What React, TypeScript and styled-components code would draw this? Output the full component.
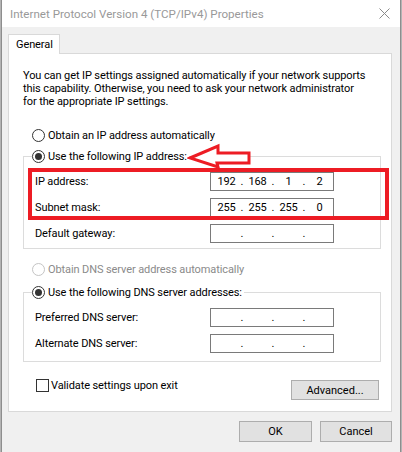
import styled, { createGlobalStyle } from "styled-components";

const GlobalStyle = createGlobalStyle`
  html, body {
    margin: 0;
    padding: 0;
  }
  body {
    background: #b4b4b4;
    font-family: Roboto, "Noto Sans", "Liberation Sans", sans-serif;
    font-size: 11px;
    letter-spacing: -0.1px;
    color: #000;
  }
`;

const Window = styled.div`
  width: 400px;
  height: 452px;
  box-sizing: border-box;
  margin-left: 1px;
  border-left: 1px solid #8e8e8e;
  border-right: 1px solid #8e8e8e;
  background: #f0f0f0;
  display: flex;
  flex-direction: column;
  overflow: hidden;
`;

const TitleBar = styled.div`
  height: 27px;
  flex-shrink: 0;
  background: #fff;
  display: flex;
  align-items: center;
  justify-content: space-between;
  padding: 0 10px 0 8px;
`;

const Title = styled.span`
  font-size: 11.6px;
  letter-spacing: 0;
  color: #999;
  white-space: nowrap;
`;

const Body = styled.div`
  flex: 1;
  display: flex;
  flex-direction: column;
  padding: 7px 8px 0 6px;
`;

const Tab = styled.div`
  align-self: flex-start;
  width: 52px;
  height: 20px;
  box-sizing: border-box;
  padding-left: 7px;
  border: 1px solid #d9d9d9;
  border-bottom: none;
  background: #fff;
  margin-bottom: -1px;
  position: relative;
  z-index: 1;
  display: flex;
  align-items: center;
`;

const Panel = styled.div`
  position: relative;
  height: 359px;
  box-sizing: border-box;
  border: 1px solid #d9d9d9;
  background: #fff;
  padding: 15px 10px 0 14px;
  display: flex;
  flex-direction: column;
`;

const Intro = styled.p`
  margin: 0;
  line-height: 13px;
  white-space: nowrap;
`;

const RadioRow = styled.label<{ $disabled?: boolean; $top?: number }>`
  display: flex;
  align-items: center;
  gap: 3px;
  height: 16px;
  margin: ${(p) => p.$top ?? 0}px 0 0 9px;
  color: ${(p) => (p.$disabled ? "#8a8a8a" : "#000")};
  white-space: nowrap;
`;

const RadioCircle = styled.span<{ $checked?: boolean; $disabled?: boolean }>`
  width: 13px;
  height: 13px;
  box-sizing: border-box;
  border-radius: 50%;
  border: 1px solid ${(p) => (p.$disabled ? "#c4c4c4" : "#333")};
  background: #fff;
  display: inline-flex;
  align-items: center;
  justify-content: center;
  flex-shrink: 0;
  &::after {
    content: "";
    width: 7px;
    height: 7px;
    border-radius: 50%;
    background: #333;
    display: ${(p) => (p.$checked ? "block" : "none")};
  }
`;

const GroupBox = styled.fieldset<{ $top: number; $bottom: number }>`
  margin: ${(p) => p.$top}px 0 0 0;
  width: 358px;
  min-width: 0;
  box-sizing: border-box;
  border: 1px solid #dcdcdc;
  padding: 8px 0 ${(p) => p.$bottom}px 8px;
`;

const Legend = styled.legend`
  padding: 0 2px 0 0;
  margin: 0;
  height: 16px;
  display: flex;
  align-items: center;
  gap: 3px;
  white-space: nowrap;
`;

const Rows = styled.div`
  display: flex;
  flex-direction: column;
  gap: 7px;
  padding-left: 3px;
`;

const FieldRow = styled.div`
  display: grid;
  grid-template-columns: 175px 124px;
  align-items: center;
  height: 19px;
`;

const IpBox = styled.div`
  height: 19px;
  box-sizing: border-box;
  border: 1px solid #7a7a7a;
  background: #fff;
  display: flex;
  align-items: center;
  padding-left: 2px;
`;

const Octet = styled.span`
  width: 27px;
  text-align: center;
`;

const Dot = styled.span`
  width: 4px;
  text-align: center;
`;

const BottomRow = styled.div`
  display: flex;
  justify-content: space-between;
  align-items: flex-start;
  margin-top: 17px;
  width: 356px;
`;

const CheckRow = styled.label`
  display: flex;
  align-items: center;
  gap: 2px;
  height: 13px;
  margin-left: 13px;
  white-space: nowrap;
`;

const CheckBox = styled.span`
  width: 13px;
  height: 13px;
  box-sizing: border-box;
  border: 1px solid #333;
  background: #fff;
`;

const Button = styled.button<{ $w: number; $h: number }>`
  width: ${(p) => p.$w}px;
  height: ${(p) => p.$h}px;
  box-sizing: border-box;
  border: 1px solid #adadad;
  background: #e1e1e1;
  font-family: inherit;
  font-size: 11px;
  color: #000;
  padding: 0;
`;

const AdvancedButton = styled(Button)`
  margin-top: 1px;
`;

const Footer = styled.div`
  display: flex;
  justify-content: flex-end;
  gap: 8px;
  margin-top: 9px;
`;

const RedBox = styled.div`
  position: absolute;
  left: 19px;
  top: 114px;
  width: 361px;
  height: 52px;
  box-sizing: border-box;
  border: 4px solid #ed1c24;
  pointer-events: none;
`;

const Arrow = styled.svg`
  position: absolute;
  left: 178px;
  top: 89px;
`;

const IpField = ({ parts }: { parts: string[] }) => (
  <IpBox>
    {parts.map((p, i) => (
      <span key={i} style={{ display: "contents" }}>
        <Octet>{p}</Octet>
        {i < 3 && <Dot>.</Dot>}
      </span>
    ))}
  </IpBox>
);

const blank = ["", "", "", ""];

export default function App() {
  return (
    <>
      <GlobalStyle />
      <Window>
        <TitleBar>
          <Title>Internet Protocol Version 4 (TCP/IPv4) Properties</Title>
          <svg width="11" height="11" viewBox="0 0 11 11">
            <path d="M0.5 0.5 L10.5 10.5 M10.5 0.5 L0.5 10.5" stroke="#8a8a8a" strokeWidth="1" />
          </svg>
        </TitleBar>
        <Body>
          <Tab>General</Tab>
          <Panel>
            <Intro>
              You can get IP settings assigned automatically if your network supports
              <br />
              this capability. Otherwise, you need to ask your network administrator
              <br />
              for the appropriate IP settings.
            </Intro>

            <RadioRow $top={19}>
              <RadioCircle />
              Obtain an IP address automatically
            </RadioRow>

            <GroupBox $top={5} $bottom={5}>
              <Legend>
                <RadioCircle $checked />
                Use the following IP address:
              </Legend>
              <Rows>
                <FieldRow>
                  <span>IP address:</span>
                  <IpField parts={["192", "168", "1", "2"]} />
                </FieldRow>
                <FieldRow>
                  <span>Subnet mask:</span>
                  <IpField parts={["255", "255", "255", "0"]} />
                </FieldRow>
                <FieldRow>
                  <span>Default gateway:</span>
                  <IpField parts={blank} />
                </FieldRow>
              </Rows>
            </GroupBox>

            <RadioRow $top={12} $disabled>
              <RadioCircle $disabled />
              Obtain DNS server address automatically
            </RadioRow>

            <GroupBox $top={7} $bottom={8}>
              <Legend>
                <RadioCircle $checked />
                Use the following DNS server addresses:
              </Legend>
              <Rows>
                <FieldRow>
                  <span>Preferred DNS server:</span>
                  <IpField parts={blank} />
                </FieldRow>
                <FieldRow>
                  <span>Alternate DNS server:</span>
                  <IpField parts={blank} />
                </FieldRow>
              </Rows>
            </GroupBox>

            <BottomRow>
              <CheckRow>
                <CheckBox />
                Validate settings upon exit
              </CheckRow>
              <AdvancedButton $w={88} $h={20}>Advanced...</AdvancedButton>
            </BottomRow>

            <RedBox />
            <Arrow width="64" height="27" viewBox="0 0 64 27">
              <path
                d="M3 15 L31 3 L31 10 L62 10 L62 20 L30 20 L31 24 Z"
                fill="#fff"
                stroke="#ed1c24"
                strokeWidth="3"
                strokeLinejoin="miter"
              />
            </Arrow>
          </Panel>
          <Footer>
            <Button $w={73} $h={21}>OK</Button>
            <Button $w={72} $h={21}>Cancel</Button>
          </Footer>
        </Body>
      </Window>
    </>
  );
}
